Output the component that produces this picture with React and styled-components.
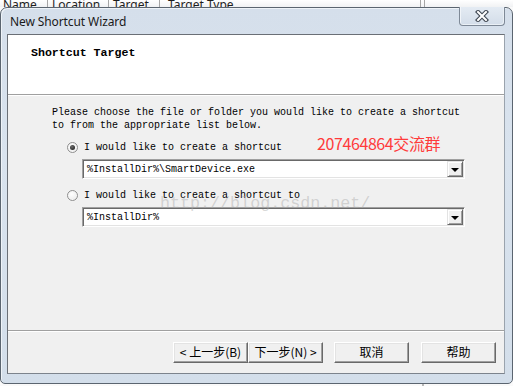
import React from "react";
import styled, { createGlobalStyle } from "styled-components";

const Global = createGlobalStyle`
  html, body { margin: 0; padding: 0; }
  body { background: #f7f7f7; width: 513px; height: 386px; overflow: hidden; }
`;

const Page = styled.div`
  width: 513px;
  height: 386px;
  display: flex;
  flex-direction: column;
  background: #fafafa;
`;

const HeaderStrip = styled.div`
  height: 7px;
  display: flex;
  overflow: hidden;
  background: linear-gradient(#ffffff, #f1f2f4);
  font-family: "Noto Sans", "Open Sans", sans-serif;
  font-size: 12px;
  color: #1e1e1e;
`;

const HeaderCell = styled.div`
  width: ${(p) => p.$w}px;
  flex: ${(p) => (p.$grow ? 1 : "none")};
  display: flex;
  align-items: flex-end;
  padding-left: ${(p) => p.$pad}px;
  box-sizing: border-box;
  border-right: ${(p) => (p.$noLine ? "none" : "1px solid #a6a6a6")};
  white-space: nowrap;
  span { line-height: 14px; margin-bottom: -5px; }
`;

const Window = styled.div`
  height: 377px;
  box-sizing: border-box;
  border: 1px solid #5b6570;
  border-radius: 7px 7px 5px 5px;
  background: linear-gradient(180deg, #d5dfeb 0%, #d9e3ee 40%, #d3deea 100%);
  box-shadow: inset 1px 1px 0 #eef3f8;
  display: flex;
  flex-direction: column;
  padding: 0 7px 9px 6px;
`;

const TitleBar = styled.div`
  height: 26px;
  display: flex;
  align-items: center;
  justify-content: space-between;
  padding-left: 3px;
`;

const TitleText = styled.div`
  font-family: "Noto Sans", "Open Sans", sans-serif;
  font-size: 12px;
  color: #1a1a1a;
  letter-spacing: -0.1px;
  margin-top: 1px;
`;

const CloseButton = styled.div`
  align-self: flex-start;
  margin-top: -1px;
  width: 46px;
  height: 19px;
  box-sizing: border-box;
  border: 1px solid #7e8997;
  border-top: none;
  border-radius: 0 0 4px 4px;
  background: linear-gradient(#e4ebf3, #d3dde9);
  box-shadow: inset 1px 0 #f1f5f9, inset -1px -1px #eaf0f6;
  display: flex;
  align-items: center;
  justify-content: center;
`;

const Client = styled.div`
  flex: 1;
  display: flex;
  flex-direction: column;
  border: 1px solid #6a6f76;
  border-right-color: #9aa3ad;
  border-bottom-color: #7c838c;
  background: #f0f0f0;
`;

const HeaderPanel = styled.div`
  height: 59px;
  background: #ffffff;
  box-sizing: border-box;
  padding: 11px 0 0 23px;
`;

const PanelTitle = styled.div`
  font-family: "Liberation Mono", "DejaVu Sans Mono", monospace;
  font-weight: bold;
  font-size: 11.6px;
  line-height: 13px;
  color: #000;
`;

const Separator = styled.div`
  height: 1px;
  background: #a0a0a0;
  border-bottom: 1px solid #ffffff;
`;

const Body = styled.div`
  position: relative;
  height: 234px;
  box-sizing: border-box;
  padding: 10px 0 0 44px;
  font-family: "Liberation Mono", "DejaVu Sans Mono", monospace;
  font-size: 10px;
  color: #000;
`;

const Paragraph = styled.div`
  line-height: 13px;
  white-space: pre;
`;

const OptionGroup = styled.div`
  margin-left: 15px;
  display: flex;
  flex-direction: column;
`;

const RadioRow = styled.div`
  display: flex;
  align-items: center;
  height: 13px;
  margin-top: ${(p) => p.$mt}px;
  line-height: 13px;
  white-space: pre;
`;

const Radio = styled.span`
  width: 11px;
  height: 11px;
  border-radius: 50%;
  box-sizing: border-box;
  border: 1px solid #8f8f8f;
  background: radial-gradient(circle at 40% 35%, #ffffff 0%, #f2f2f2 55%, #d8d8d8 100%);
  box-shadow: inset 0 0 0 1px #f6f6f6;
  margin-right: 6px;
  display: flex;
  align-items: center;
  justify-content: center;
  &::after {
    content: "";
    display: ${(p) => (p.$checked ? "block" : "none")};
    width: 5px;
    height: 5px;
    border-radius: 50%;
    background: radial-gradient(circle at 40% 35%, #6b6b6b, #141414);
  }
`;

const Combo = styled.div`
  margin-top: ${(p) => p.$mt}px;
  margin-left: 30px;
  width: 383px;
  height: 20px;
  box-sizing: border-box;
  border: 1px solid;
  border-color: #a0a0a0 #ffffff #ffffff #a0a0a0;
  box-shadow: inset 1px 1px 0 #696969, inset -1px -1px 0 #e3e3e3;
  background: #ffffff;
  display: flex;
  align-items: center;
  padding: 1px 1px 1px 4px;
`;

const ComboText = styled.span`
  flex: 1;
  line-height: 16px;
  padding-top: 1px;
  white-space: pre;
`;

const DropButton = styled.span`
  width: 16px;
  height: 16px;
  box-sizing: border-box;
  background: #f0f0f0;
  border: 1px solid;
  border-color: #e3e3e3 #696969 #696969 #e3e3e3;
  box-shadow: inset 1px 1px 0 #ffffff, inset -1px -1px 0 #a0a0a0;
  display: flex;
  align-items: center;
  justify-content: center;
  &::after {
    content: "";
    width: 0;
    height: 0;
    border-left: 4px solid transparent;
    border-right: 4px solid transparent;
    border-top: 4px solid #000;
    margin-top: 1px;
  }
`;

const QQNote = styled.div`
  position: absolute;
  left: 309px;
  top: 37px;
  font-family: "Noto Sans CJK SC", "Noto Sans", sans-serif;
  font-size: 16px;
  line-height: 20px;
  color: #ff3b3b;
  letter-spacing: -0.4px;
  white-space: nowrap;
`;

const Watermark = styled.div`
  position: absolute;
  left: 152px;
  top: 98px;
  font-family: "Liberation Mono", monospace;
  font-size: 16.7px;
  line-height: 20px;
  color: rgba(170, 170, 170, 0.45);
  white-space: nowrap;
  pointer-events: none;
`;

const Footer = styled.div`
  flex: 1;
  display: flex;
  justify-content: flex-end;
  align-items: flex-start;
  padding: 10px 8px 0 0;
`;

const ButtonGroup = styled.div`
  display: flex;
  margin-left: ${(p) => p.$ml}px;
`;

const Button = styled.div`
  width: 75px;
  height: 21px;
  box-sizing: border-box;
  background: #f0f0f0;
  border: 1px solid;
  border-color: #ffffff #696969 #696969 #ffffff;
  box-shadow: inset -1px -1px 0 #a0a0a0, inset 1px 1px 0 #e3e3e3;
  display: flex;
  align-items: center;
  justify-content: center;
  font-family: "Noto Sans CJK SC", "Noto Sans", sans-serif;
  font-size: 12px;
  line-height: 14px;
  color: #000;
  white-space: pre;
  padding-bottom: 1px;
`;

const BottomStrip = styled.div`
  flex: 1;
  display: flex;
`;

const BottomCell = styled.div`
  width: ${(p) => p.$w}px;
  border-right: 2px solid #b8b8b8;
`;

function CloseGlyph() {
  return (
    <svg width="14" height="12" viewBox="0 0 14 12">
      <path d="M3 2 L11 10 M11 2 L3 10" stroke="#3f4752" strokeWidth="4.2" strokeLinecap="square" fill="none" />
      <path d="M3 2 L11 10 M11 2 L3 10" stroke="#ffffff" strokeWidth="2" strokeLinecap="square" fill="none" />
    </svg>
  );
}

export default function App() {
  return (
    <Page>
      <Global />
      <HeaderStrip>
        <HeaderCell $w={48} $pad={3}><span>Name</span></HeaderCell>
        <HeaderCell $w={61} $pad={4}><span>Location</span></HeaderCell>
        <HeaderCell $w={51} $pad={4}><span>Target</span></HeaderCell>
        <HeaderCell $w={261} $pad={8}><span>Target Type</span></HeaderCell>
        <HeaderCell $w={4} $pad={0} />
        <HeaderCell $grow $pad={0} $noLine />
      </HeaderStrip>
      <Window>
        <TitleBar>
          <TitleText>New Shortcut Wizard</TitleText>
          <CloseButton><CloseGlyph /></CloseButton>
        </TitleBar>
        <Client>
          <HeaderPanel>
            <PanelTitle>Shortcut Target</PanelTitle>
          </HeaderPanel>
          <Separator />
          <Body>
            <Paragraph>
              {"Please choose the file or folder you would like to create a shortcut\nto from the appropriate list below."}
            </Paragraph>
            <OptionGroup>
              <RadioRow $mt={9}>
                <Radio $checked />
                I would like to create a shortcut
              </RadioRow>
            </OptionGroup>
            <Combo $mt={5}>
              <ComboText>%InstallDir%\SmartDevice.exe</ComboText>
              <DropButton />
            </Combo>
            <OptionGroup>
              <RadioRow $mt={10}>
                <Radio />
                I would like to create a shortcut to
              </RadioRow>
            </OptionGroup>
            <Combo $mt={5}>
              <ComboText>%InstallDir%</ComboText>
              <DropButton />
            </Combo>
            <QQNote>207464864交流群</QQNote>
            <Watermark>http://blog.csdn.net/</Watermark>
          </Body>
          <Separator />
          <Footer>
            <ButtonGroup $ml={0}>
              <Button>{"< 上一步(B)"}</Button>
              <Button>{"下一步(N) >"}</Button>
            </ButtonGroup>
            <ButtonGroup $ml={11}>
              <Button>取消</Button>
            </ButtonGroup>
            <ButtonGroup $ml={12}>
              <Button>帮助</Button>
            </ButtonGroup>
          </Footer>
        </Client>
      </Window>
      <BottomStrip>
        <BottomCell $w={422} />
      </BottomStrip>
    </Page>
  );
}
